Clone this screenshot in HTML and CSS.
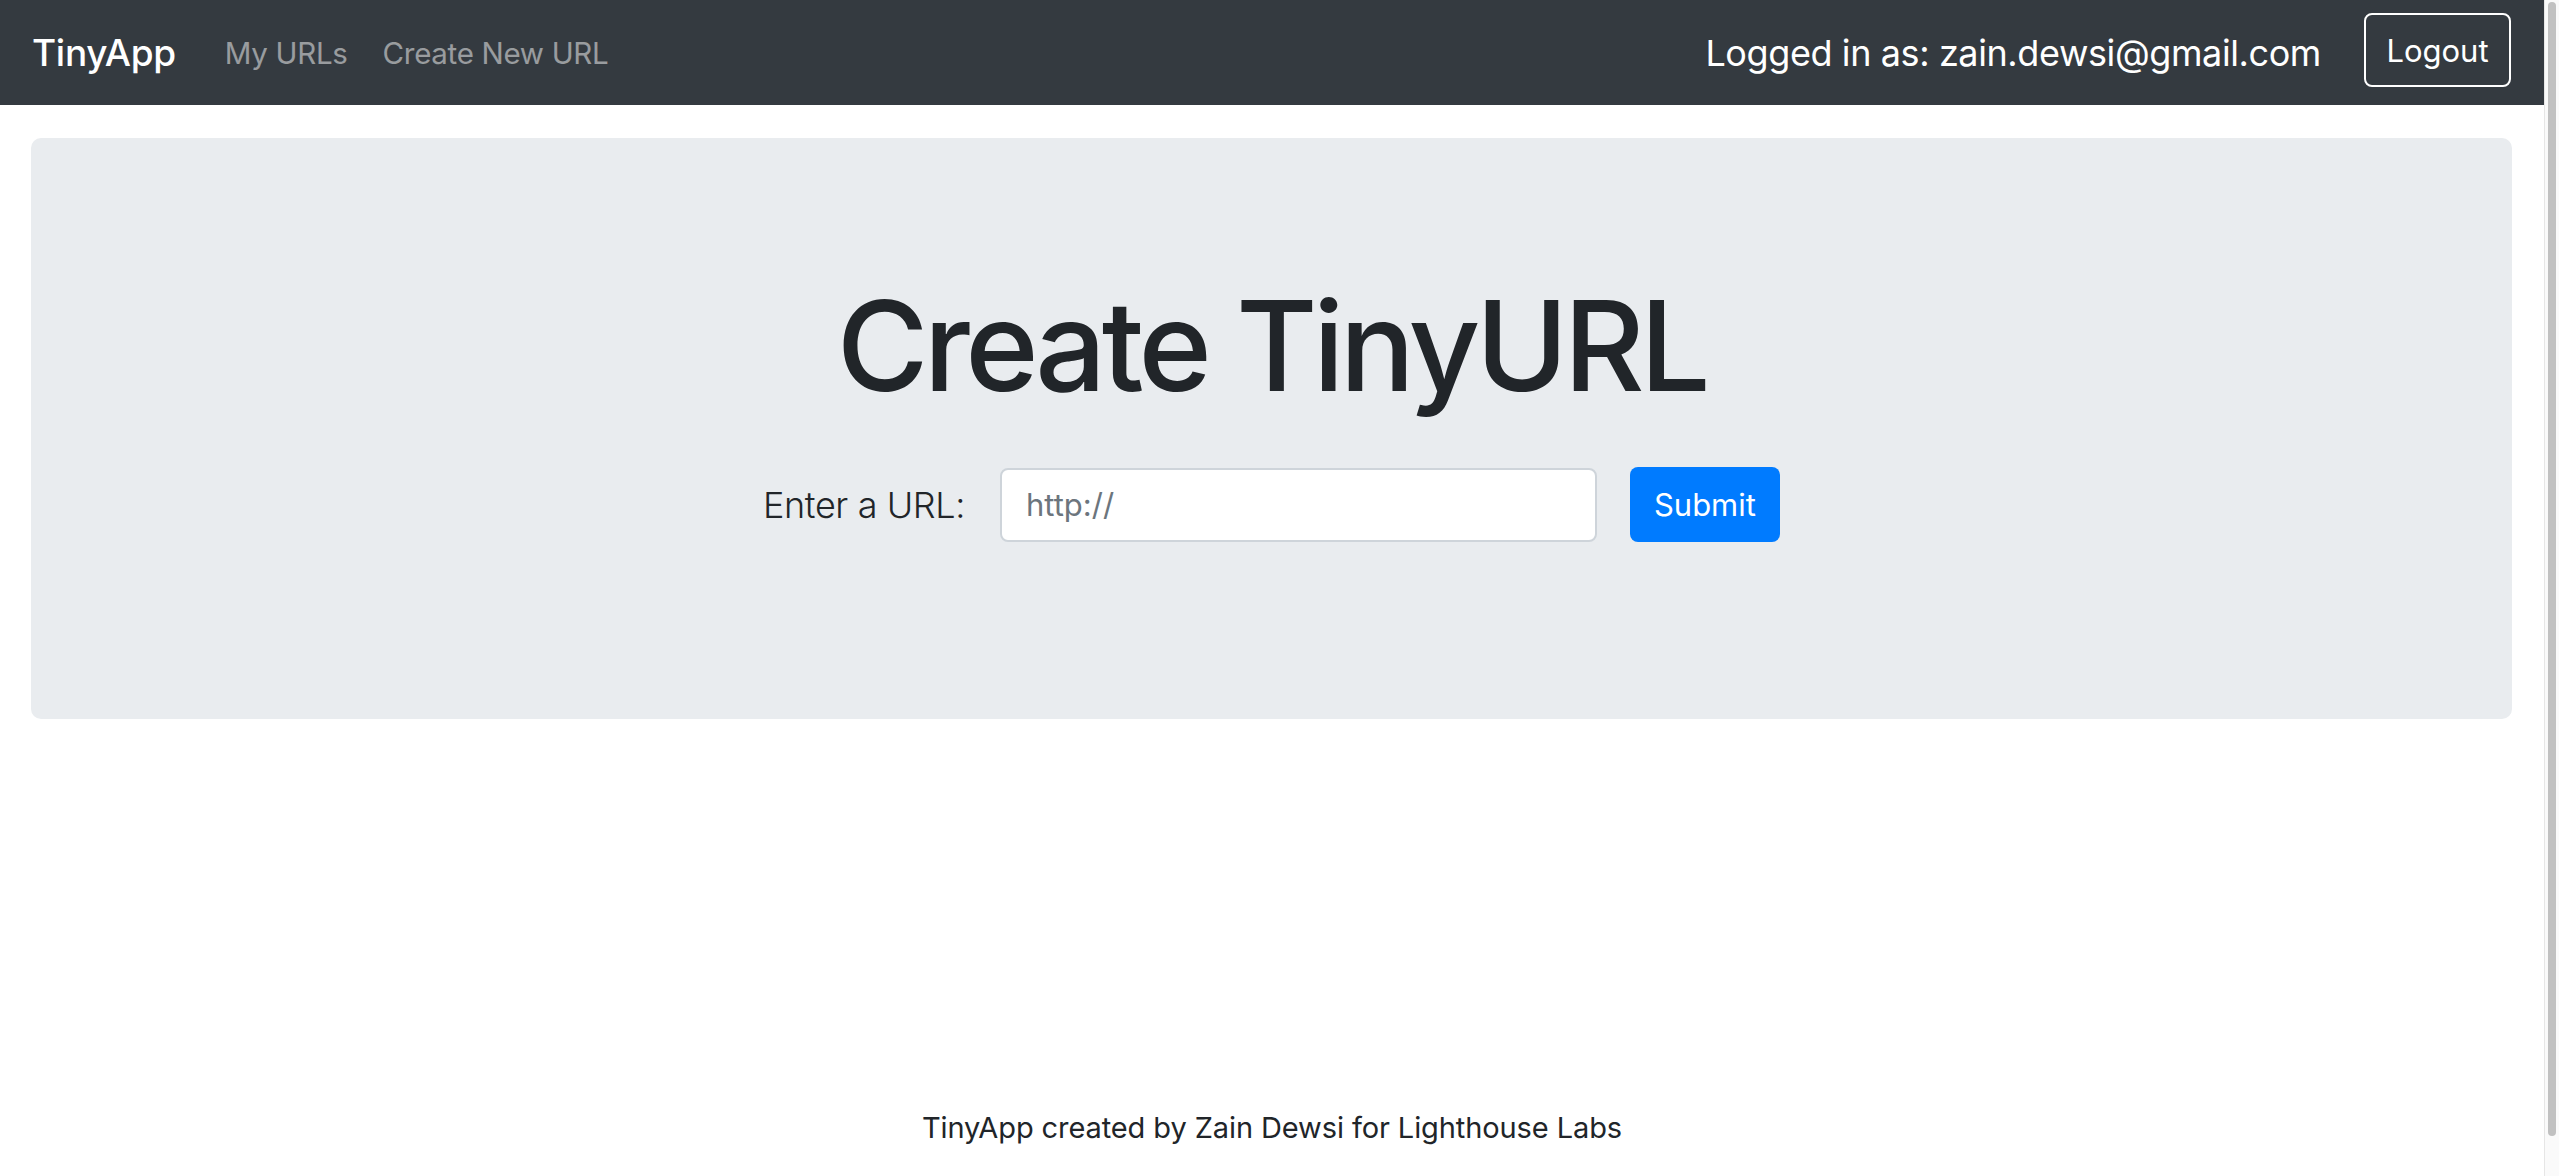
FILE: index.html
```html
<!DOCTYPE html>
<html lang="en">
<head>
<meta charset="utf-8">
<title>TinyApp</title>
<link rel="stylesheet" href="styles.css">
</head>
<body>
  <div class="page">
    <nav class="navbar">
      <a class="brand" href="#">TinyApp</a>
      <ul class="nav-links">
        <li><a href="#">My URLs</a></li>
        <li><a href="#">Create New URL</a></li>
      </ul>
      <div class="nav-user">
        <span class="user-text">Logged in as: zain.dewsi@gmail.com</span>
        <button class="btn-logout" type="button">Logout</button>
      </div>
    </nav>
    <main class="main">
      <section class="jumbotron">
        <h1 class="title">Create TinyURL</h1>
        <form class="url-form">
          <label class="url-label" for="longURL">Enter a URL:</label>
          <input class="url-input" id="longURL" type="text" placeholder="http://">
          <button class="btn-submit" type="submit">Submit</button>
        </form>
      </section>
    </main>
    <footer class="footer">TinyApp created by Zain Dewsi for Lighthouse Labs</footer>
  </div>
  <div class="scrollbar" aria-hidden="true"><div class="scrollbar-thumb"></div></div>
</body>
</html>
```

FILE: styles.css
```css
* { box-sizing: border-box; }

body {
  margin: 0;
  display: flex;
  align-items: flex-start;
  font-family: Inter, "Noto Sans", "Liberation Sans", sans-serif;
  color: #212529;
  background: #fff;
}

.page {
  flex: 1;
  min-width: 0;
}

.scrollbar {
  flex: none;
  width: 15px;
  height: 100vh;
  position: sticky;
  top: 0;
  background: #fafafa;
  border-left: 1px solid #e6e6e6;
  padding: 2px 3px 40px 3px;
}

.scrollbar-thumb {
  height: 100%;
  background: #c1c1c1;
  border-radius: 4px;
}

.navbar {
  height: 105px;
  background: #343a40;
  display: flex;
  align-items: center;
  padding: 0 33px 0 32px;
}

.brand {
  color: #fff;
  text-decoration: none;
  font-size: 37px;
  font-weight: 500;
  letter-spacing: -0.3px;
}

.nav-links {
  list-style: none;
  display: flex;
  gap: 35px;
  margin: 0 0 0 49px;
  padding: 0;
}

.nav-links a {
  color: rgba(255, 255, 255, 0.5);
  text-decoration: none;
  font-size: 29.5px;
  letter-spacing: -0.3px;
}

.nav-user {
  margin-left: auto;
  display: flex;
  align-items: center;
  gap: 43px;
}

.user-text {
  color: #fff;
  font-size: 36px;
  letter-spacing: -0.4px;
}

.btn-logout {
  width: 147px;
  height: 74px;
  background: transparent;
  border: 2px solid #fff;
  border-radius: 8px;
  color: #fff;
  font-family: inherit;
  font-size: 31px;
  margin-top: -5px;
}

.main {
  padding: 33px 32px 0 31px;
}

.jumbotron {
  background: #e9ecef;
  border-radius: 10px;
  height: 581px;
  display: flex;
  flex-direction: column;
  align-items: center;
  padding-top: 145px;
}

.title {
  margin: 0;
  font-size: 125px;
  font-weight: 500;
  line-height: 1;
  letter-spacing: -4.6px;
}

.url-form {
  display: flex;
  align-items: center;
  margin-top: 59px;
}

.url-label {
  font-size: 36px;
  font-weight: 300;
  letter-spacing: -0.4px;
  margin-right: 35px;
}

.url-input {
  width: 597px;
  height: 74px;
  border: 2px solid #ced4da;
  border-radius: 8px;
  padding: 0 24px;
  font-family: inherit;
  font-size: 31px;
  color: #495057;
  background: #fff;
}

.url-input::placeholder { color: #6c757d; }

.btn-submit {
  margin-left: 33px;
  width: 150px;
  height: 75px;
  background: #007bff;
  border: none;
  border-radius: 8px;
  color: #fff;
  font-family: inherit;
  font-size: 31px;
}

.footer {
  margin-top: 386px;
  text-align: center;
  font-size: 29px;
  letter-spacing: -0.1px;
  line-height: 46px;
  padding-bottom: 60px;
}
```
